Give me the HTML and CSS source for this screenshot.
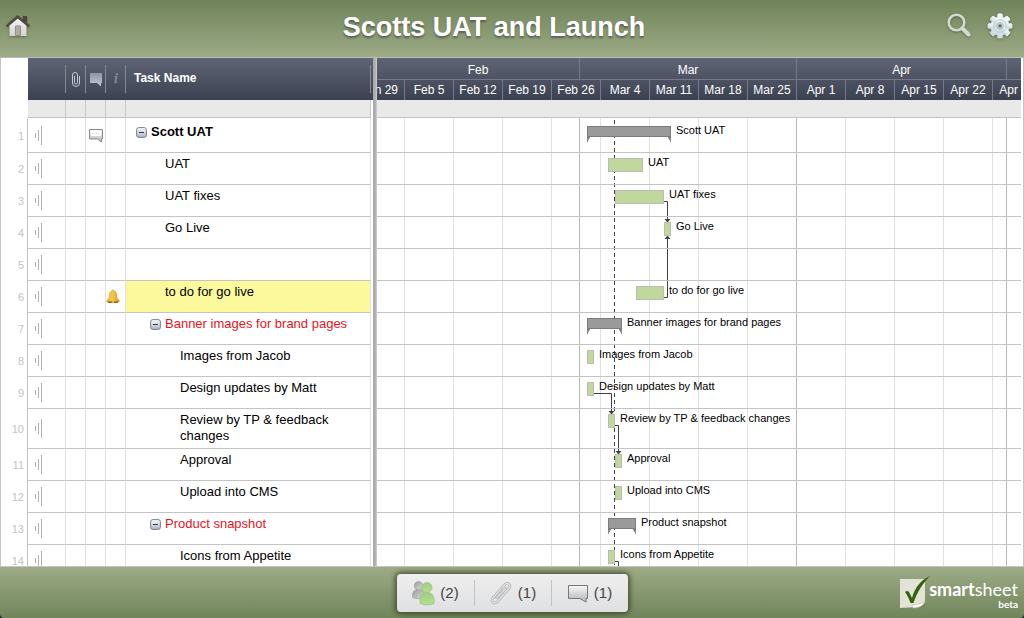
FILE: index.html
```html
<!DOCTYPE html>
<html lang="en">
<head>
<meta charset="utf-8">
<title>Scotts UAT and Launch</title>
<link rel="stylesheet" href="styles.css">
</head>
<body>
<svg class="defs" aria-hidden="true">
  <defs>
    <linearGradient id="silver" x1="0" y1="0" x2="0" y2="1"><stop offset="0" stop-color="#f6f6f6"/><stop offset="1" stop-color="#d2d2d2"/></linearGradient>
    <linearGradient id="steel" x1="0" y1="0" x2="0" y2="1"><stop offset="0" stop-color="#fafbfd"/><stop offset="1" stop-color="#aeb4c0"/></linearGradient>
    <linearGradient id="bubble" x1="0" y1="0" x2="0" y2="1"><stop offset="0" stop-color="#8d96a6"/><stop offset="1" stop-color="#c3c8d2"/></linearGradient>
    <linearGradient id="note" x1="0" y1="0" x2="0" y2="1"><stop offset="0" stop-color="#f7f7f7"/><stop offset="1" stop-color="#b4b4b4"/></linearGradient>
    <linearGradient id="grey" x1="0" y1="0" x2="1" y2="1"><stop offset="0" stop-color="#9c9c9c"/><stop offset="1" stop-color="#dadada"/></linearGradient>
    <linearGradient id="green" x1="0" y1="0" x2="0" y2="1"><stop offset="0" stop-color="#9fce83"/><stop offset="1" stop-color="#b5e08d"/></linearGradient>
    <linearGradient id="gold" x1="0" y1="0" x2="1" y2="0"><stop offset="0" stop-color="#e8ae32"/><stop offset=".45" stop-color="#f5c94e"/><stop offset="1" stop-color="#d89a20"/></linearGradient>
    <linearGradient id="ice" x1="0" y1="0" x2="0" y2="1"><stop offset="0" stop-color="#f4f8fa"/><stop offset="1" stop-color="#cbdbe2"/></linearGradient>
  </defs>
  <symbol id="signal" viewBox="0 0 8 19"><path d="M1.500 7v5M4.500 4v11M7.500 0v19" fill="none" stroke="#b2b2b2"/></symbol>
  <symbol id="minus" viewBox="0 0 11 11"><rect x=".6" y=".6" width="9.800" height="9.800" rx="2.200" fill="url(#steel)" stroke="#7b8290"/><path d="M3 5.500h5" stroke="#333a48"/></symbol>
</svg>

<header class="topbar">
  <button class="icon-button" type="button" aria-label="Home">
    <svg width="26" height="26" viewBox="0 0 26 26"><path d="M18 3h4v6h-4z" fill="#4a4639"/><path d="M4.500 12 13 5l8.500 7v11h-17z" fill="url(#silver)"/><path d="M.8 12.500 12.500 2 25 12.500l-2 1.500L12.800 5.500 2.500 14z" fill="#50493d"/><path d="M10.500 13h5v9.500h-5z" fill="#b2ada4" stroke="#958d82"/></svg>
  </button>
  <h1 class="title">Scotts UAT and Launch</h1>
  <div class="actions">
    <button class="icon-button" type="button" aria-label="Search">
      <svg width="26" height="26" viewBox="0 0 26 26"><circle cx="10.500" cy="9.500" r="7.800" fill="none" stroke="#d4d9ce" stroke-width="2.600"/><path d="m16.500 15.500 6 6" stroke="#d4d9ce" stroke-width="4" stroke-linecap="round"/></svg>
    </button>
    <button class="icon-button" type="button" aria-label="Settings">
      <svg width="26" height="26" viewBox="0 0 26 26"><g fill="url(#ice)"><circle cx="13" cy="13" r="9.500"/><g id="teeth"><rect x="10.200" y=".6" width="5.600" height="24.800" rx="1.500"/><rect x=".6" y="10.200" width="24.800" height="5.600" rx="1.500"/></g><use href="#teeth" transform="rotate(45 13 13)"/></g><circle cx="13" cy="13" r="6.200" fill="none" stroke="#b6c9d2"/><circle cx="13" cy="13" r="3.400" fill="#c9d8de" stroke="#a9bcc5"/><circle cx="13" cy="13" r="1.800" fill="#66775a"/></svg>
    </button>
  </div>
</header>

<main class="workspace">
  <section class="sheet" aria-label="Tasks">
    <table class="grid">
      <colgroup><col class="c-num"><col class="c-menu"><col class="c-icon"><col class="c-icon"><col class="c-icon"><col></colgroup>
      <thead>
        <tr>
          <td class="num"></td>
          <th></th>
          <th><svg aria-label="Attachments" role="img" width="10" height="17" viewBox="0 0 10 17"><path d="M3.500 5v6.500a1.500 1.500 0 0 0 3 0V4a2.500 2.500 0 0 0-5 0v8a3.500 3.500 0 0 0 7 0V5" fill="none" stroke="#c6cad2"/></svg></th>
          <th><svg aria-label="Comments" role="img" width="14" height="15" viewBox="0 0 14 15"><path d="M1 1h12v10h-1v3.500L8 11H1z" fill="url(#bubble)"/></svg></th>
          <th><span class="info">i</span></th>
          <th class="task-head">Task Name</th>
        </tr>
        <tr class="band"><td class="num"></td><td></td><td></td><td></td><td></td><td></td></tr>
      </thead>
      <tbody>
        <tr class="first"><td class="num">1</td><td class="menu"><svg width="8" height="19"><use href="#signal"/></svg></td><td></td><td class="mark"><svg width="16" height="15" viewBox="0 0 16 15"><path d="M1.500 1.500h13v9.500h-1v3L9.500 11h-8z" fill="url(#steel)" stroke="#8c8c8c"/><path d="M3 3h10v5H3z" fill="#fff"/><path d="M4 5.500h8" stroke="#d0d0d0" stroke-dasharray="1 1"/></svg></td><td></td><td class="task l0"><button class="fold" type="button" aria-label="Collapse Scott UAT"><svg width="11" height="11"><use href="#minus"/></svg></button><b>Scott UAT</b></td></tr>
        <tr><td class="num">2</td><td class="menu"><svg width="8" height="19"><use href="#signal"/></svg></td><td></td><td></td><td></td><td class="task l1">UAT</td></tr>
        <tr><td class="num">3</td><td class="menu"><svg width="8" height="19"><use href="#signal"/></svg></td><td></td><td></td><td></td><td class="task l1">UAT fixes</td></tr>
        <tr><td class="num">4</td><td class="menu"><svg width="8" height="19"><use href="#signal"/></svg></td><td></td><td></td><td></td><td class="task l1">Go Live</td></tr>
        <tr><td class="num">5</td><td class="menu"><svg width="8" height="19"><use href="#signal"/></svg></td><td></td><td></td><td></td><td class="task l1"></td></tr>
        <tr><td class="num">6</td><td class="menu"><svg width="8" height="19"><use href="#signal"/></svg></td><td></td><td></td><td class="alert"><svg width="14" height="15" viewBox="0 0 14 15"><circle cx="7" cy="2" r="1.600" fill="#e6b040"/><path d="M7 1.500c3 0 4 2 4 5 0 2.500 1 3.500 2.500 4.500V13H.5v-2C2 10 3 9 3 6.500c0-3 1-5 4-5z" fill="url(#gold)"/><path d="M1 12.500h12L11.500 14h-9z" fill="#8a6215"/><circle cx="7" cy="13" r="1.300" fill="#e6b040"/></svg></td><td class="task l1 highlight">to do for go live</td></tr>
        <tr><td class="num">7</td><td class="menu"><svg width="8" height="19"><use href="#signal"/></svg></td><td></td><td></td><td></td><td class="task l1 group"><button class="fold" type="button" aria-label="Collapse Banner images"><svg width="11" height="11"><use href="#minus"/></svg></button>Banner images for brand pages</td></tr>
        <tr><td class="num">8</td><td class="menu"><svg width="8" height="19"><use href="#signal"/></svg></td><td></td><td></td><td></td><td class="task l2">Images from Jacob</td></tr>
        <tr><td class="num">9</td><td class="menu"><svg width="8" height="19"><use href="#signal"/></svg></td><td></td><td></td><td></td><td class="task l2">Design updates by Matt</td></tr>
        <tr class="tall"><td class="num">10</td><td class="menu"><svg width="8" height="19"><use href="#signal"/></svg></td><td></td><td></td><td></td><td class="task l2">Review by TP &amp; feedback changes</td></tr>
        <tr><td class="num">11</td><td class="menu"><svg width="8" height="19"><use href="#signal"/></svg></td><td></td><td></td><td></td><td class="task l2">Approval</td></tr>
        <tr><td class="num">12</td><td class="menu"><svg width="8" height="19"><use href="#signal"/></svg></td><td></td><td></td><td></td><td class="task l2">Upload into CMS</td></tr>
        <tr><td class="num">13</td><td class="menu"><svg width="8" height="19"><use href="#signal"/></svg></td><td></td><td></td><td></td><td class="task l1 group"><button class="fold" type="button" aria-label="Collapse Product snapshot"><svg width="11" height="11"><use href="#minus"/></svg></button>Product snapshot</td></tr>
        <tr><td class="num">14</td><td class="menu"><svg width="8" height="19"><use href="#signal"/></svg></td><td></td><td></td><td></td><td class="task l2">Icons from Appetite</td></tr>
      </tbody>
    </table>
  </section>

  <div class="splitter"></div>

  <section class="timeline" aria-label="Gantt chart">
    <div class="scale">
      <div class="months"><span class="feb">Feb</span><span class="mar">Mar</span><span class="apr">Apr</span></div>
      <div class="weeks"><span>Jan 29</span><span>Feb 5</span><span>Feb 12</span><span>Feb 19</span><span>Feb 26</span><span>Mar 4</span><span>Mar 11</span><span>Mar 18</span><span>Mar 25</span><span>Apr 1</span><span>Apr 8</span><span>Apr 15</span><span>Apr 22</span><span>Apr 29</span></div>
    </div>
    <div class="scale-band"></div>
    <div class="canvas">
      <svg class="links" width="644" height="470" aria-hidden="true">
        <path d="M237.500 2v460" stroke="#444" stroke-dasharray="4 3" fill="none"/>
        <g fill="none" stroke="#3c3f45"><path d="M287 83.500h3.500V103"/><path d="M287 179.500h3.500V119"/><path d="M217 275.500h17.500V295"/><path d="M238 307.500h3.500V335"/><path d="M238 443.500h3.500V460"/></g>
        <path d="M287.500 101h6l-3 3.500zM287.500 121h6l-3-3.500zM231.500 293h6l-3 3.500zM238.500 333h6l-3 3.500z" fill="#3c3f45"/>
      </svg>
      <div class="lane first"><div class="item" style="left:210px"><svg class="summary" style="width:84px"><rect class="shade" width="100%" height="14"/><rect class="rail" width="100%" height="11"/></svg><span>Scott UAT</span></div></div>
      <div class="lane"><div class="item" style="left:231px"><i class="bar" style="width:35px"></i><span>UAT</span></div></div>
      <div class="lane"><div class="item" style="left:238px"><i class="bar" style="width:49px"></i><span>UAT fixes</span></div></div>
      <div class="lane"><div class="item" style="left:287px"><i class="bar" style="width:7px"></i><span>Go Live</span></div></div>
      <div class="lane"></div>
      <div class="lane"><div class="item" style="left:259px"><i class="bar" style="width:28px"></i><span>to do for go live</span></div></div>
      <div class="lane"><div class="item" style="left:210px"><svg class="summary" style="width:35px"><rect class="shade" width="100%" height="14"/><rect class="rail" width="100%" height="11"/></svg><span>Banner images for brand pages</span></div></div>
      <div class="lane"><div class="item" style="left:210px"><i class="bar" style="width:7px"></i><span>Images from Jacob</span></div></div>
      <div class="lane"><div class="item" style="left:210px"><i class="bar" style="width:7px"></i><span>Design updates by Matt</span></div></div>
      <div class="lane tall"><div class="item" style="left:231px"><i class="bar" style="width:7px"></i><span>Review by TP &amp; feedback changes</span></div></div>
      <div class="lane"><div class="item" style="left:238px"><i class="bar" style="width:7px"></i><span>Approval</span></div></div>
      <div class="lane"><div class="item" style="left:238px"><i class="bar" style="width:7px"></i><span>Upload into CMS</span></div></div>
      <div class="lane"><div class="item" style="left:231px"><svg class="summary" style="width:28px"><rect class="shade" width="100%" height="14"/><rect class="rail" width="100%" height="11"/></svg><span>Product snapshot</span></div></div>
      <div class="lane"><div class="item" style="left:231px"><i class="bar" style="width:7px"></i><span>Icons from Appetite</span></div></div>
    </div>
  </section>
</main>

<footer class="bottombar">
  <nav class="panel" aria-label="Sheet details">
    <button type="button"><svg width="24" height="26" viewBox="0 0 24 26"><g fill="url(#grey)" stroke="#9a9a9a" stroke-width=".6"><path d="M1.500 17.500C1 12 3 9.500 7.500 9.500S14 12 14 17.500c-3 1.600-9.500 1.600-12.500 0z"/><circle cx="7.500" cy="5.800" r="4.300"/></g><g fill="url(#green)" stroke="#8fc073" stroke-width=".6"><path d="M9 23.500C8.500 16 10.500 12.500 16 12.500s7.500 3.500 7 11c-3.500 1.800-10.500 1.800-14 0z"/><circle cx="16" cy="7.500" r="5"/></g></svg>(2)</button>
    <button type="button"><svg width="24" height="24" viewBox="0 0 24 24"><g fill="none" stroke-linecap="round" stroke-linejoin="round"><path id="clip" d="M8 16.500 17 7.500M13 6.500l3-3c3-2.500 6.500.5 4 4L8.500 20.500c-3 3-7 .5-4.500-3.500l8-9" stroke="#b4b4b4" stroke-width="2.800"/><path d="M8 16.500 17 7.500M13 6.500l3-3c3-2.500 6.500.5 4 4L8.500 20.500c-3 3-7 .5-4.500-3.500l8-9" stroke="#e2e2e2" stroke-width="1.400"/></g></svg>(1)</button>
    <button type="button"><svg width="22" height="20" viewBox="0 0 22 20"><path d="M1.500 2.500h19v13h-1.500V19l-6-3.500H1.500z" fill="url(#note)" stroke="#777"/></svg>(1)</button>
  </nav>
  <div class="brand">
    <svg width="34" height="38" viewBox="0 0 34 38"><path d="M3 6h24v29c-8-2-16-2-24 0z" fill="#6e8056" opacity=".6"/><path d="M2 5h25v23l-7 5c-6 .5-12 .7-18 1z" fill="#e3e2d6"/><path d="M14 31c4 0 9-1 13-4-1 4-5 7-12 7z" fill="#fafaf5" stroke="#bbb9a8" stroke-width=".6"/><path d="M7 18c2-2 4-1 5 2l2 4C17 13 23 6 32 2 25 9 19 18 15.500 29h-3C11 25 9.500 21 7 18z" fill="#33610c"/></svg>
    <div class="wordmark"><div class="name"><b>smart</b>sheet</div><div class="beta">beta</div></div>
  </div>
</footer>
</body>
</html>
```
FILE: styles.css
```css
* { box-sizing: border-box; }

body {
  margin: 0;
  height: 100vh;
  display: flex;
  flex-direction: column;
  overflow: hidden;
  background: #111;
  color: #000;
  font: 13px/16px "Liberation Sans", Arial, sans-serif;
}

button {
  margin: 0;
  padding: 0;
  border: 0;
  background: none;
  font: inherit;
  color: inherit;
}

svg { display: block; }

.defs {
  position: absolute;
  width: 0;
  height: 0;
}

/* Top bar */
.topbar {
  display: grid;
  grid-template-columns: 42px 1fr 78px;
  align-items: center;
  height: 58px;
  flex: none;
  padding-bottom: 5px;
  border-bottom: 1px solid #b9bcb4;
  background: linear-gradient(#6f8359, #9dab86);
}

.topbar > .icon-button { padding-left: 5px; }

.icon-button svg { filter: drop-shadow(0 1px 1px rgba(50, 60, 35, 0.5)); }

.title {
  margin: 0;
  padding-top: 2px;
  color: #fff;
  font-size: 27px;
  line-height: 32px;
  text-align: center;
  text-shadow: 0 2px 2px rgba(60, 60, 60, 0.6);
}

.actions {
  display: flex;
  gap: 15px;
}

/* Workspace */
.workspace {
  flex: 1;
  min-height: 0;
  display: flex;
  overflow: hidden;
  padding-right: 2px;
  border-left: 1px solid #c4c4c4;
  border-right: 1px solid #c4c4c4;
  background: #fff;
}

.sheet {
  flex: 0 0 372px;
  overflow: hidden;
  padding-right: 2px;
  background: linear-gradient(#5f6574, #3b4151) right top / 2px 42px no-repeat;
}

.splitter {
  flex: 0 0 4px;
  border: solid #ababab;
  border-width: 0 1px 0 2px;
  border-right-color: #c8c8c8;
  background: #b4b4b4;
}

.grid {
  width: 100%;
  table-layout: fixed;
  border-collapse: separate;
  border-spacing: 0;
}

.c-num { width: 27px; }
.c-menu { width: 38px; }
.c-icon { width: 20px; }

.grid td, .grid th { padding: 0; }

.grid th {
  height: 42px;
  background:
    linear-gradient(#838896, #838896) right center / 1px 28px no-repeat,
    linear-gradient(#5f6574, #3b4151);
  color: #fff;
  font-size: 12px;
  text-align: left;
}

.grid th svg, .mark svg { margin: 0 auto; }

.grid th.task-head { padding: 0 0 2px 8px; }

.info {
  display: block;
  color: #858b98;
  font: italic bold 14px/16px "Liberation Serif", serif;
  text-align: center;
}

.grid .band td:not(.num) {
  height: 18px;
  border-right: 1px solid #c8c8c8;
  border-bottom: 1px solid #c4c4c4;
  background: #e9e9e9;
}

.grid tbody td {
  height: 32px;
  border-right: 1px solid #e2e2e2;
  border-bottom: 1px solid #c4c4c4;
}

.grid tbody .first td { height: 35px; }

.grid tbody .tall td { height: 40px; }

.grid tbody td.num {
  border-bottom: 0;
  border-right-color: #c4c4c4;
  padding-right: 3px;
  color: #c4c4c4;
  font-size: 11px;
  text-align: right;
}

.menu svg { margin-left: 6px; }

.grid tbody td.task {
  padding-top: 3px;
  padding-right: 24px;
  vertical-align: top;
}

.grid tbody .first td.task { padding-top: 6px; }

.grid tbody .l0 { padding-left: 10px; }
.grid tbody .l1 { padding-left: 39px; }
.grid tbody td.l1.group { padding-left: 24px; padding-right: 0; }
.grid tbody .l2 { padding-left: 54px; }

.group { color: #e8141c; }

.highlight { background: #fbf99c; }

.fold {
  display: inline-block;
  margin-right: 4px;
  vertical-align: -2px;
}

/* Timeline */
.timeline {
  flex: 1;
  min-width: 0;
  overflow: hidden;
}

.scale {
  height: 42px;
  background: linear-gradient(#5f6574, #3b4151);
  color: #fff;
  font-size: 12px;
  text-align: center;
}

.months, .weeks { display: flex; }

.months {
  height: 22px;
  border-bottom: 1px solid #747a89;
}

.months span {
  flex: none;
  padding-top: 4px;
  border-right: 1px solid #747a89;
}

.months .feb { width: 203px; }
.months .mar { width: 217px; }
.months .apr { width: 210px; }

.weeks { margin-left: -22px; }

.weeks span {
  flex: 0 0 49px;
  height: 20px;
  padding-top: 2px;
  border-left: 1px solid #747a89;
  white-space: nowrap;
}

.scale-band {
  height: 18px;
  border-bottom: 1px solid #c4c4c4;
  background: #e9e9e9;
}

.canvas {
  position: relative;
  background:
    linear-gradient(#b9b9b9, #b9b9b9) 202px 0 / 1px 100% no-repeat,
    linear-gradient(#b9b9b9, #b9b9b9) 419px 0 / 1px 100% no-repeat,
    linear-gradient(#b9b9b9, #b9b9b9) 629px 0 / 1px 100% no-repeat,
    linear-gradient(90deg, #e2e2e2 1px, transparent 1px) 27px 0 / 49px 100%;
}

.lane {
  position: relative;
  height: 32px;
  border-bottom: 1px solid #c4c4c4;
}

.lane.first { height: 35px; }
.lane.tall { height: 40px; }

.item {
  position: absolute;
  top: 2px;
  display: flex;
  align-items: flex-start;
  gap: 5px;
  font-size: 11px;
  line-height: 14px;
  white-space: nowrap;
}

.first .item { top: 5px; }

.bar {
  height: 14px;
  margin-top: 3px;
  border: 1px solid #b9bdb4;
  background: #c0d89b;
}

.summary {
  height: 17px;
  margin-top: 3px;
  background: #8a8a8a;
  clip-path: polygon(0 0, 100% 0, 100% 17px, calc(100% - 3px) 11px, 3px 11px, 0 17px);
}

.summary .shade { fill: #8a8a8a; }
.summary .rail { fill: #9a9a9a; stroke: #7c7c7c; stroke-width: 2px; }

.links {
  position: absolute;
  top: 0;
  left: 0;
}

/* Bottom bar */
.bottombar {
  flex: none;
  display: grid;
  grid-template-columns: 1fr auto 1fr;
  align-items: center;
  height: 52px;
  border-top: 1px solid #c4c6be;
  border-radius: 0 0 4px 4px;
  background: linear-gradient(#9dab86, #71855b);
}

.panel {
  grid-column: 2;
  display: flex;
  align-items: center;
  padding: 6px 0;
  border-radius: 4px;
  background: linear-gradient(#eeeeee, #dfe0e2);
  box-shadow: 0 0 5px 2px rgba(40, 50, 25, 0.7);
  color: #444;
  font-size: 15px;
}

.panel button {
  display: flex;
  align-items: center;
  justify-content: center;
  gap: 5px;
  width: 77px;
  height: 26px;
}

.panel button + button { border-left: 1px solid #c3c3c3; }

.brand {
  grid-column: 3;
  justify-self: end;
  display: flex;
  align-items: center;
  padding-right: 6px;
  color: #fff;
}

.brand svg { margin-right: -3px; }

.wordmark {
  padding-top: 4px;
  text-align: right;
}

.name {
  font: 400 18px/18px Lato, sans-serif;
}

.name b { font-weight: 700; }

.beta {
  font: 700 10px/12px Lato, sans-serif;
}
```
